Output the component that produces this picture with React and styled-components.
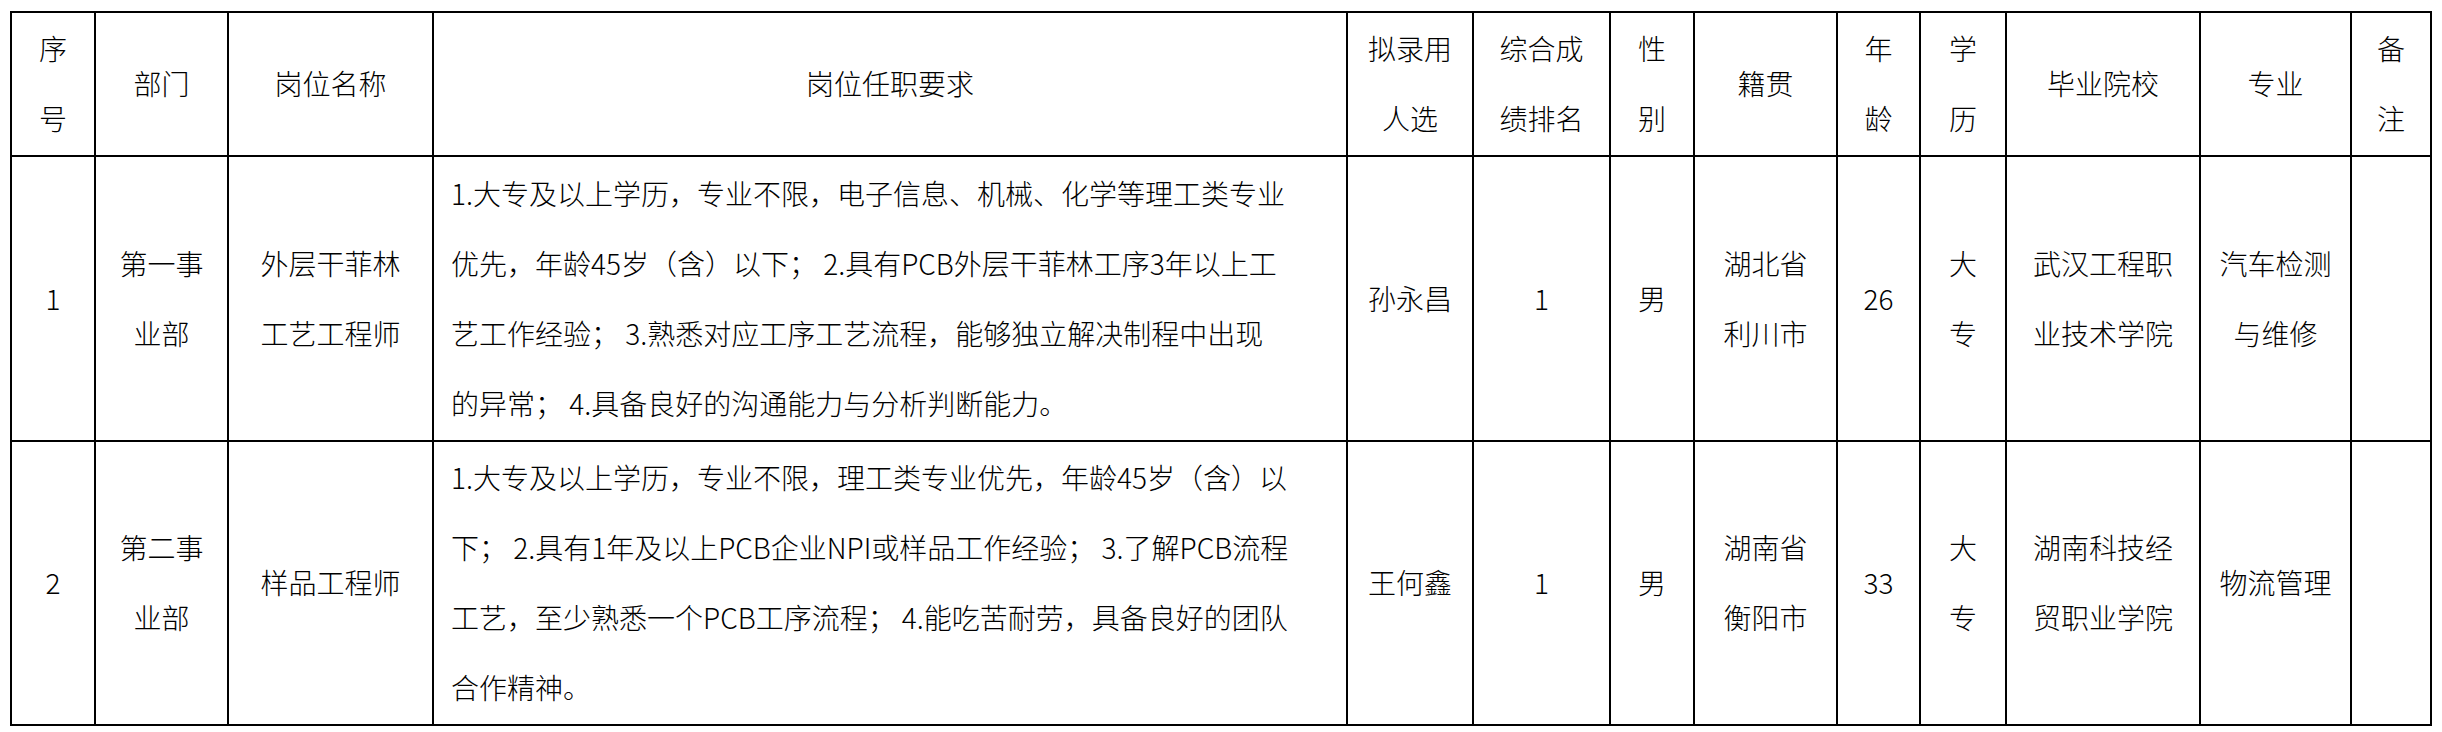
import React from 'react';
import styled, { createGlobalStyle } from 'styled-components';

const Global = createGlobalStyle`
  html, body { margin: 0; padding: 0; background: #fff; }
  body { font-family: "Noto Sans CJK SC", "Noto Sans", sans-serif; color: #000; }
`;

const Page = styled.div`
  padding: 11px 0 0 10px;
`;

const Table = styled.table`
  border-collapse: collapse;
  table-layout: fixed;
  width: 2422px;
  font-family: "Noto Sans CJK SC", "Noto Sans", sans-serif;
  font-size: 28px;
  font-weight: 300;
  color: #000;
`;

const Row = styled.tr`
  height: ${(p) => p.$h}px;
`;

const HeadCell = styled.th`
  border: 2px solid #000;
  padding: 0 4px 2px;
  font-weight: 300;
  line-height: 70px;
  text-align: center;
  vertical-align: middle;
  white-space: nowrap;
`;

const Cell = styled.td`
  border: 2px solid #000;
  padding: ${(p) => (p.$left ? '0 8px 2px 17px' : '0 4px 2px')};
  line-height: 70px;
  text-align: ${(p) => (p.$left ? 'left' : 'center')};
  vertical-align: middle;
  white-space: nowrap;
`;

const Line = styled.span`
  display: block;
`;

const widths = [84, 133, 205, 914, 126, 137, 84, 143, 83, 86, 194, 151, 80];

const headers = [
  ['序', '号'],
  ['部门'],
  ['岗位名称'],
  ['岗位任职要求'],
  ['拟录用', '人选'],
  ['综合成', '绩排名'],
  ['性', '别'],
  ['籍贯'],
  ['年', '龄'],
  ['学', '历'],
  ['毕业院校'],
  ['专业'],
  ['备', '注'],
];

const rows = [
  {
    h: 285,
    cells: [
      ['1'],
      ['第一事', '业部'],
      ['外层干菲林', '工艺工程师'],
      [
        '1.大专及以上学历，专业不限，电子信息、机械、化学等理工类专业',
        '优先，年龄45岁（含）以下； 2.具有PCB外层干菲林工序3年以上工',
        '艺工作经验； 3.熟悉对应工序工艺流程，能够独立解决制程中出现',
        '的异常； 4.具备良好的沟通能力与分析判断能力。',
      ],
      ['孙永昌'],
      ['1'],
      ['男'],
      ['湖北省', '利川市'],
      ['26'],
      ['大', '专'],
      ['武汉工程职', '业技术学院'],
      ['汽车检测', '与维修'],
      [],
    ],
  },
  {
    h: 283,
    cells: [
      ['2'],
      ['第二事', '业部'],
      ['样品工程师'],
      [
        '1.大专及以上学历，专业不限，理工类专业优先，年龄45岁（含）以',
        '下； 2.具有1年及以上PCB企业NPI或样品工作经验； 3.了解PCB流程',
        '工艺，至少熟悉一个PCB工序流程； 4.能吃苦耐劳，具备良好的团队',
        '合作精神。',
      ],
      ['王何鑫'],
      ['1'],
      ['男'],
      ['湖南省', '衡阳市'],
      ['33'],
      ['大', '专'],
      ['湖南科技经', '贸职业学院'],
      ['物流管理'],
      [],
    ],
  },
];

const Lines = ({ items }) =>
  items.map((t, i) => <Line key={i}>{t}</Line>);

export default function App() {
  return (
    <>
      <Global />
      <Page>
        <Table>
          <colgroup>
            {widths.map((w, i) => (
              <col key={i} style={{ width: w }} />
            ))}
          </colgroup>
          <thead>
            <Row $h={143}>
              {headers.map((h, i) => (
                <HeadCell key={i}>
                  <Lines items={h} />
                </HeadCell>
              ))}
            </Row>
          </thead>
          <tbody>
            {rows.map((r, ri) => (
              <Row key={ri} $h={r.h}>
                {r.cells.map((c, ci) => (
                  <Cell key={ci} $left={ci === 3}>
                    <Lines items={c} />
                  </Cell>
                ))}
              </Row>
            ))}
          </tbody>
        </Table>
      </Page>
    </>
  );
}
